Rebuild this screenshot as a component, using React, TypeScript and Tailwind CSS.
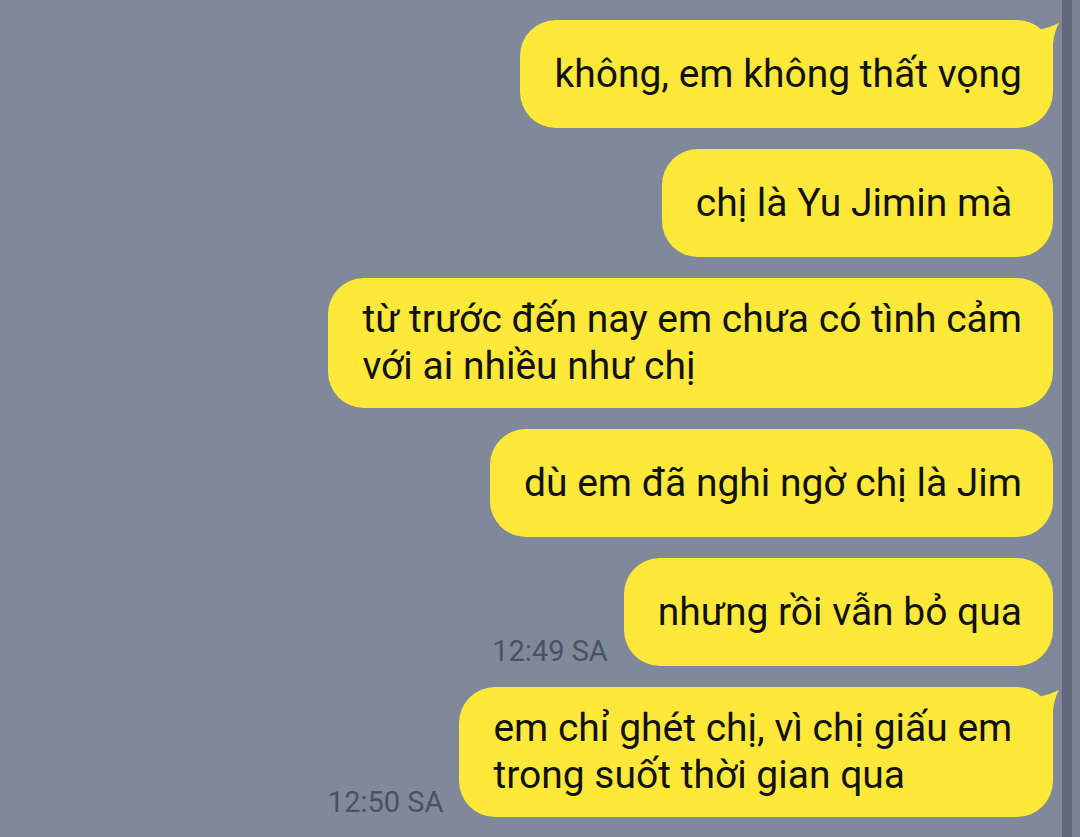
const messages: { lines: string[]; tail?: boolean; time?: string }[] = [
  { lines: ["không, em không thất vọng"], tail: true },
  { lines: ["chị là Yu Jimin mà "] },
  { lines: ["từ trước đến nay em chưa có tình cảm", "với ai nhiều như chị"] },
  { lines: ["dù em đã nghi ngờ chị là Jim"] },
  { lines: ["nhưng rồi vẫn bỏ qua"], time: "12:49 SA" },
  { lines: ["em chỉ ghét chị, vì chị giấu em ", "trong suốt thời gian qua"], tail: true, time: "12:50 SA" },
];

const Tail = () => (
  <svg
    className="absolute right-[-8px] top-0"
    width="32"
    height="40"
    viewBox="0 0 32 40"
  >
    <path d="M8 12 L13 9 Q22 7 30 3 Q25 12 24 24 L24 40 L8 40 Z" fill="#fee93a" />
  </svg>
);

const Bubble = ({ lines, tail }: { lines: string[]; tail?: boolean }) => (
  <div className="relative">
    <div className="min-h-[108px] flex flex-col justify-center rounded-[36px] bg-[#fee93a] pl-[34px] pr-[31px] py-[18px] text-[39px] leading-[47px] text-[#111111] whitespace-pre">
      {lines.map((l, i) => (
        <div key={i}>{l}</div>
      ))}
    </div>
    {tail && <Tail />}
  </div>
);

export default function App() {
  return (
    <div
      className="w-[1080px] h-[837px] overflow-hidden flex bg-[#7f899a]"
      style={{ fontFamily: "Roboto, 'Noto Sans', sans-serif" }}
    >
      <div className="flex-1 flex flex-col items-end gap-[21px] pt-[20px] pr-[9px]">
        {messages.map((m, i) => (
          <div key={i} className="flex items-end gap-[16px]">
            {m.time && (
              <span className="text-[29px] leading-[34px] text-[#4a5262] mb-[-2px]">{m.time}</span>
            )}
            <Bubble lines={m.lines} tail={m.tail} />
          </div>
        ))}
      </div>
      <div className="w-[10px] h-full bg-[#5f6778]" />
      <div className="w-[8px] h-full bg-[#7c8596]" />
    </div>
  );
}
